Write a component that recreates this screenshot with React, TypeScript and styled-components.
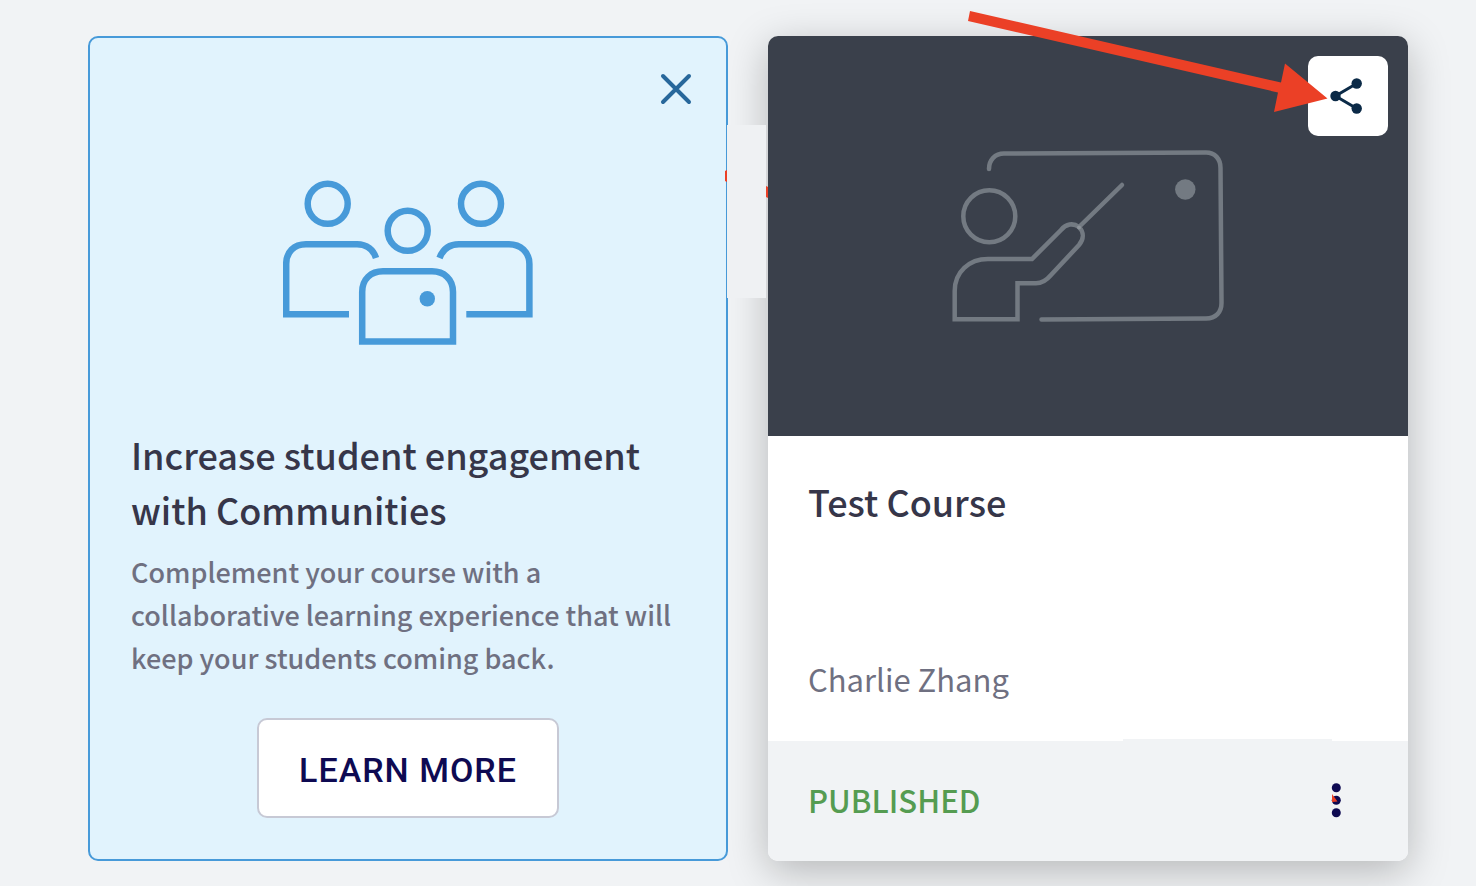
import React from 'react';
import styled, { createGlobalStyle } from 'styled-components';

const GlobalStyle = createGlobalStyle`
  *, *::before, *::after { box-sizing: border-box; }
  body {
    margin: 0;
    background: #f1f3f5;
    font-family: "Noto Sans CJK SC", "Noto Sans", sans-serif;
    color: #363649;
  }
  h2, p { margin: 0; }
  button { font: inherit; cursor: pointer; }
`;

const Board = styled.main`
  display: grid;
  grid-template-columns: 1fr 1fr;
  gap: 40px;
  padding: 36px 68px 25px 88px;
  overflow: hidden;
`;

const Card = styled.article`
  position: relative;
  display: flex;
  flex-direction: column;
  min-width: 0;
  border-radius: 10px;
`;

const PromoCard = styled(Card)`
  padding: 34px 33px 40px 41px;
  background: #e1f3fd;
  border: 2px solid #479ad9;
`;

const CourseCard = styled(Card)`
  background: #fff;
  box-shadow: 0 10px 40px rgba(0, 0, 0, 0.25);
`;

const CloseButton = styled.button`
  align-self: flex-end;
  display: flex;
  padding: 0;
  border: 0;
  background: none;
`;

const Illustration = styled.svg`
  display: block;
  align-self: center;
  flex: none;
`;

const PromoArt = styled(Illustration)`
  margin: 74px 8px 81px 0;
`;

const Title = styled.h2`
  font-size: 36px;
  font-weight: 500;
  line-height: 55px;
`;

const Description = styled.p`
  margin-top: 13px;
  font-size: 27px;
  font-weight: 500;
  line-height: 43px;
  color: #6f7081;
`;

const LearnButton = styled.button`
  align-self: center;
  margin: 39px 8px 0 0;
  padding: 4px 40px 0;
  height: 100px;
  border: 2px solid #c7c9d5;
  border-radius: 10px;
  background: #fff;
  color: #0e0a52;
  font-family: Roboto, sans-serif;
  font-size: 34px;
  font-weight: 500;
  letter-spacing: 1px;
  white-space: nowrap;
`;

const Cover = styled.div`
  display: flex;
  justify-content: center;
  padding: 112px 0 112px;
  border-radius: 10px 10px 0 0;
  background: #3a404b;
`;

const ShareButton = styled.button`
  position: absolute;
  top: 20px;
  right: 20px;
  display: flex;
  padding: 0;
  border: 0;
  border-radius: 10px;
  background: #fff;
`;

const CourseBody = styled.div`
  display: flex;
  flex-direction: column;
  justify-content: space-between;
  flex: 1;
  min-height: 305px;
  padding: 38px 40px;
`;

const Author = styled.p`
  font-size: 31px;
  line-height: 48px;
  color: #6f7081;
`;

const CourseFooter = styled.footer`
  display: flex;
  align-items: center;
  justify-content: space-between;
  height: 120px;
  padding: 0 52px 2px 40px;
  border-radius: 0 0 10px 10px;
  background: #f1f3f5;
`;

const Status = styled.span`
  font-size: 31px;
  font-weight: 500;
  line-height: 48px;
  color: #559c51;
`;

const MenuButton = styled.button`
  display: flex;
  padding: 0;
  border: 0;
  background: none;
`;

const Annotation = styled.svg`
  position: absolute;
  top: -36px;
  right: 0;
  overflow: visible;
  pointer-events: none;
`;

const Communities = () => (
  <PromoArt width="250" height="166" viewBox="283 180 250 166" fill="none" stroke="#479ad9" strokeWidth="6.5" aria-hidden="true">
    <circle cx="327.700" cy="203.800" r="20" />
    <circle cx="481" cy="203.800" r="20" />
    <circle cx="407.700" cy="230.800" r="20" />
    <path d="M349 314.200H286.200V264C286.200 252 294 244.200 306 244.200H357C367 244.200 373.500 250 376 258" />
    <path d="M466.300 314.200H529.400V264C529.400 252 520.500 244.200 509 244.200H459C449 244.200 442.500 250 439.500 258" />
    <path d="M362.200 341.600V292C362.200 279 371 271.300 383 271.300H432C444 271.300 453 279 453 292V341.600Z" />
    <circle cx="427.300" cy="298.700" r="7.700" fill="#479ad9" stroke="none" />
  </PromoArt>
);

const Presenter = () => (
  <Illustration width="272" height="176" viewBox="952 148 272 176" fill="none" stroke="#737a82" strokeWidth="4.500" aria-hidden="true">
    <path strokeLinecap="round" d="M989 169C989 160 995 153.500 1004 153.500L1206 152.500C1215 152.500 1220.500 159 1220.500 168L1221.500 303C1221.500 312 1216 318.500 1206 318.500L1041.500 319.500" />
    <circle cx="989.300" cy="216.300" r="26" />
    <path d="M954.700 319.300V291C954.700 272 969 259 988 259H1032L1061 230C1066 224 1073 222.500 1079 227C1084 232 1084 239 1079 245L1051 275Q1044 283.300 1036 283.300H1017.500V319.300Z" />
    <path strokeLinecap="round" d="M1079 227L1122 185" />
    <circle cx="1185.300" cy="189.500" r="10.200" fill="#737a82" stroke="none" />
    <circle cx="1079" cy="227.500" r="2" fill="#8d939a" stroke="none" />
  </Illustration>
);

export default function App() {
  return (
    <>
      <GlobalStyle />
      <Board>
        <PromoCard>
          <CloseButton type="button" aria-label="Close">
            <svg width="34" height="34" viewBox="0 0 34 34" stroke="#27679b" strokeWidth="4" strokeLinecap="round">
              <path d="M4 4L30 30M30 4L4 30" />
            </svg>
          </CloseButton>
          <Communities />
          <Title>Increase student engagement with Communities</Title>
          <Description>
            Complement your course with a collaborative learning experience that will keep your students coming back.
          </Description>
          <LearnButton type="button">LEARN MORE</LearnButton>
        </PromoCard>

        <CourseCard>
          <Cover>
            <Presenter />
          </Cover>
          <ShareButton type="button" aria-label="Share course">
            <svg width="80" height="80" viewBox="1308 56 80 80" fill="#0b2a47">
              <path d="M1356.700 83.500L1335.500 96L1356.700 108.500" fill="none" stroke="#0b2a47" strokeWidth="3" />
              <circle cx="1356.700" cy="83.500" r="5.200" />
              <circle cx="1335.500" cy="96" r="5.200" />
              <circle cx="1356.700" cy="108.500" r="5.200" />
            </svg>
          </ShareButton>
          <CourseBody>
            <Title>Test Course</Title>
            <Author>Charlie Zhang</Author>
          </CourseBody>
          <CourseFooter>
            <Status>PUBLISHED</Status>
            <MenuButton type="button" aria-label="Course options">
              <svg width="40" height="40" viewBox="1316 780 40 40" fill="#0e0a52">
                <circle cx="1336.300" cy="787.700" r="4.500" />
                <circle cx="1336.300" cy="800.200" r="4.500" />
                <circle cx="1336.300" cy="812.700" r="4.500" />
                <path d="M1332 794L1337.500 801.500L1332 802Z" fill="#eb4026" />
              </svg>
            </MenuButton>
          </CourseFooter>
          <Annotation width="684" height="825" viewBox="724 0 684 825" aria-hidden="true">
            <rect x="727" y="125" width="39" height="173" fill="#eff1f3" />
            <path d="M725 171L727 170V182L725 181ZM766 186L768 187V198L766 197Z" fill="#eb4026" />
            <rect x="1123" y="739" width="209" height="2" fill="#f1f3f5" />
            <path d="M970 11L1281 82.500L1285 63.500L1327.500 98.500L1274 112L1278 92.500L968 21Z" fill="#eb4026" />
          </Annotation>
        </CourseCard>
      </Board>
    </>
  );
}
